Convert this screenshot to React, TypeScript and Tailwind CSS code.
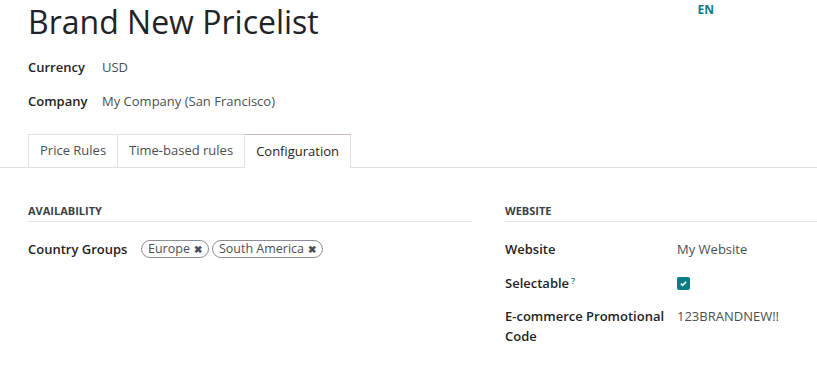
import React from 'react';

const font = { fontFamily: '"Open Sans", "Noto Sans", sans-serif' };

const Tag = ({ label }: { label: string }) => (
  <span className="inline-flex items-center gap-1 h-[18px] px-[6px] rounded-full border border-[#8b8f93] text-[12.5px] text-[#4a4f55] leading-none">
    {label}
    <span className="text-[10px] font-bold text-[#4a4f55]">✖</span>
  </span>
);

export default function App() {
  return (
    <div className="w-[817px] h-[366px] bg-white text-[#212529] overflow-hidden relative" style={font}>
      <div className="flex justify-between items-start pl-[28px] pr-[103px]">
        <h1 className="text-[32px] leading-[44px] text-[#1f2327]">Brand New Pricelist</h1>
        <span className="mt-[1px] text-[12px] font-bold text-[#0c7c8c]">EN</span>
      </div>

      <div className="pl-[28px] mt-[14px] flex flex-col gap-[14px] text-[13px]">
        <div className="flex items-center">
          <span className="w-[74px] font-semibold text-[#1f2327]">Currency</span>
          <span className="text-[#4a4f55]">USD</span>
        </div>
        <div className="flex items-center">
          <span className="w-[74px] font-semibold text-[#1f2327]">Company</span>
          <span className="text-[#4a4f55]">My Company (San Francisco)</span>
        </div>
      </div>

      <div className="mt-[23px] flex border-b border-[#dee2e6] pl-[28px] text-[13px]">
        <div className="h-[33px] px-[11px] flex items-center border border-b-0 border-[#dee2e6] text-[#4a4f55] -mb-px">Price Rules</div>
        <div className="h-[33px] px-[11px] flex items-center border border-l-0 border-b-0 border-[#dee2e6] text-[#4a4f55] -mb-px">Time-based rules</div>
        <div className="h-[34px] px-[11px] flex items-center border border-l-0 border-b-0 border-[#dee2e6] border-t-[#c9b8c6] bg-white text-[#1f2327] -mb-px">Configuration</div>
      </div>

      <div className="flex pl-[28px] mt-[35px] gap-[33px] text-[13px]">
        <div className="w-[444px]">
          <div className="text-[11px] font-bold text-[#3b3f44] pb-[1px] border-b border-[#e4e6e8]">AVAILABILITY</div>
          <div className="flex items-center mt-[18px]">
            <span className="w-[113px] font-semibold text-[#1f2327]">Country Groups</span>
            <div className="flex gap-[3px]">
              <Tag label="Europe" />
              <Tag label="South America" />
            </div>
          </div>
        </div>
        <div className="flex-1">
          <div className="text-[11px] font-bold text-[#3b3f44] pb-[1px] border-b border-[#e4e6e8]">WEBSITE</div>
          <div className="flex items-center mt-[18px]">
            <span className="w-[172px] font-semibold text-[#1f2327]">Website</span>
            <span className="text-[#4a4f55]">My Website</span>
          </div>
          <div className="flex items-center mt-[15px]">
            <span className="w-[172px] font-semibold text-[#1f2327]">
              Selectable<sup className="text-[9px] text-[#0c7c8c] ml-[2px]">?</sup>
            </span>
            <span className="w-[13px] h-[13px] rounded-[2px] bg-[#017e84] flex items-center justify-center">
              <svg width="9" height="9" viewBox="0 0 10 10">
                <path d="M2 5.2 L4 7 L8 3" stroke="white" strokeWidth="1.8" fill="none" />
              </svg>
            </span>
          </div>
          <div className="flex items-start mt-[12px]">
            <span className="w-[172px] font-semibold text-[#1f2327] leading-[20px]">
              E-commerce Promotional
              <br />
              Code
            </span>
            <span className="text-[#4a4f55] leading-[20px]">123BRANDNEW!!</span>
          </div>
        </div>
      </div>
    </div>
  );
}
